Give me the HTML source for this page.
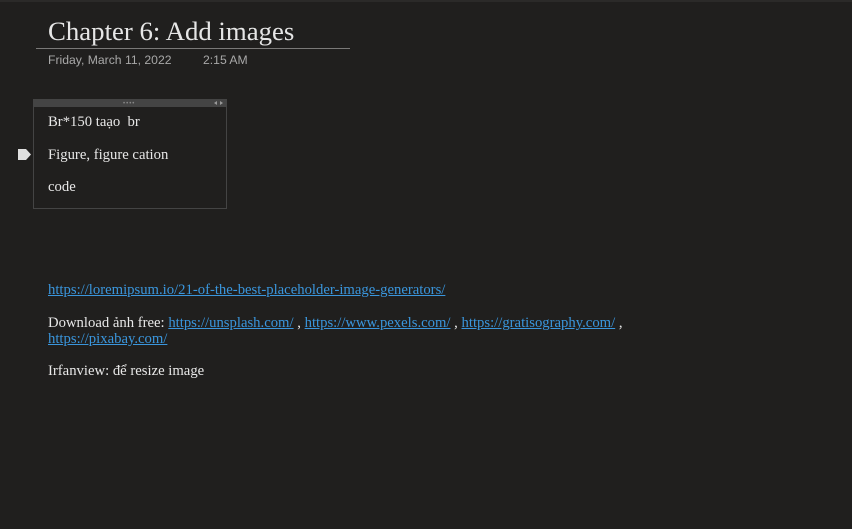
<!DOCTYPE html>
<html><head><meta charset="utf-8"><style>
html,body{margin:0;padding:0;}
body{width:852px;height:529px;background:#201f1e;position:relative;overflow:hidden;font-family:"Liberation Serif",serif;color:#e8e8e8;}
.a{position:absolute;white-space:nowrap;}
a{color:#3a96dd;text-decoration:underline;}
.t{font-size:14.7px;line-height:16px;}
</style></head><body>
<div class="a" style="left:0;top:0;width:852px;height:2px;background:#2b2a29"></div>
<div class="a" style="left:48px;top:15px;font-size:26.8px;line-height:32px;color:#e6e6e6">Chapter 6: Add images</div>
<div class="a" style="left:36px;top:48px;width:314px;height:1px;background:#7a7978"></div>
<div class="a" style="left:48px;top:53px;font-family:'Liberation Sans',sans-serif;font-size:12.2px;line-height:14px;color:#a8a8a8">Friday, March 11, 2022</div>
<div class="a" style="left:203px;top:53px;font-family:'Liberation Sans',sans-serif;font-size:12.2px;line-height:14px;color:#a8a8a8">2:15 AM</div>
<div class="a" style="left:33px;top:99px;width:192px;height:108px;border:1px solid #444"></div>
<div class="a" style="left:33px;top:99px;width:194px;height:8px;background:#444"></div>
<div class="a" style="left:123px;top:102px;font-size:6px;line-height:4px;color:#888;font-family:'Liberation Sans',sans-serif;letter-spacing:1px">••••</div>
<div class="a" style="left:214px;top:101px;width:0;height:0;border-right:3px solid #999;border-top:2px solid transparent;border-bottom:2px solid transparent"></div>
<div class="a" style="left:220px;top:101px;width:0;height:0;border-left:3px solid #999;border-top:2px solid transparent;border-bottom:2px solid transparent"></div>
<svg class="a" style="left:18px;top:149px" width="14" height="11"><path d="M0 0H8L13 5.5L8 11H0Z" fill="#e0e0e0"/></svg>
<div class="a t" style="left:48px;top:114px">Br*150 taạo&nbsp; br</div>
<div class="a t" style="left:48px;top:147px">Figure, figure cation</div>
<div class="a t" style="left:48px;top:179px">code</div>
<div class="a t" style="left:48px;top:282px"><a>https://loremipsum.io/21-of-the-best-placeholder-image-generators/</a></div>
<div class="a t" style="left:48px;top:315px">Download ảnh free: <a>https://unsplash.com/</a> , <a>https://www.pexels.com/</a> , <a>https://gratisography.com/</a> ,</div>
<div class="a t" style="left:48px;top:331px"><a>https://pixabay.com/</a></div>
<div class="a t" style="left:48px;top:363px">Irfanview: để resize image</div>
</body></html>
